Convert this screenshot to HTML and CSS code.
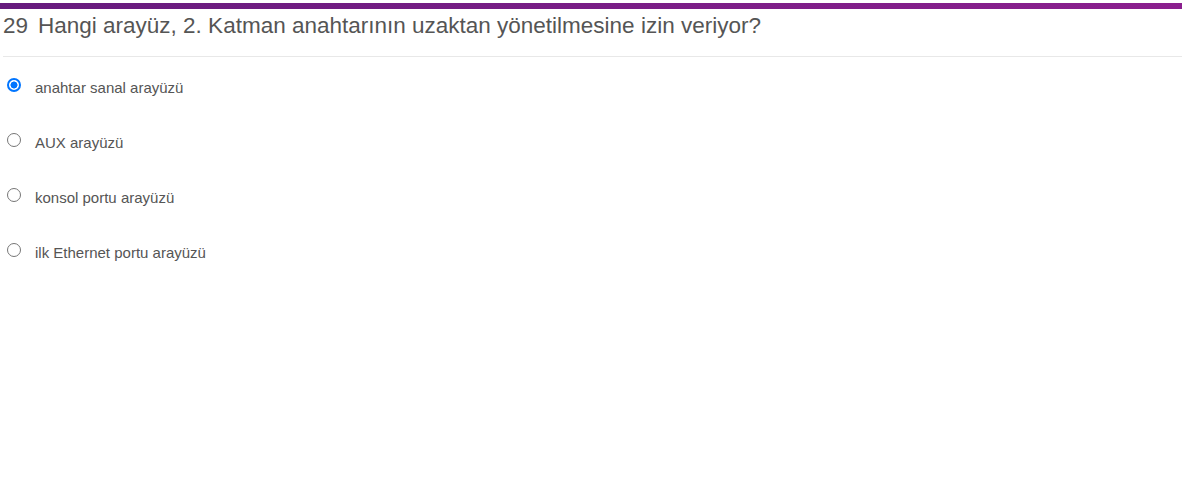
FILE: index.html
```html
<!DOCTYPE html>
<html lang="tr">
<head>
<meta charset="utf-8">
<link rel="stylesheet" href="styles.css">
</head>
<body>
<div class="topbar"></div>
<div class="question">
  <h2 class="title"><span class="num">29</span>Hangi arayüz, 2. Katman anahtarının uzaktan yönetilmesine izin veriyor?</h2>
  <ul class="options">
    <li class="option"><span class="radio checked"></span><span class="label">anahtar sanal arayüzü</span></li>
    <li class="option"><span class="radio"></span><span class="label">AUX arayüzü</span></li>
    <li class="option"><span class="radio"></span><span class="label">konsol portu arayüzü</span></li>
    <li class="option"><span class="radio"></span><span class="label">ilk Ethernet portu arayüzü</span></li>
  </ul>
</div>
</body>
</html>
```
FILE: styles.css
```css
html, body {
  margin: 0;
  padding: 0;
  background: #fff;
  font-family: "Liberation Sans", Arial, sans-serif;
  color: #555;
}
.topbar {
  margin-top: 3px;
  height: 6px;
  background: linear-gradient(to right, #661b7d, #8b1f8e);
}
.question {
  padding: 0 0 0 3px;
}
.title {
  margin: 0;
  padding: 4px 0 17px 0;
  font-size: 22.5px;
  font-weight: normal;
  line-height: 26px;
  color: #555;
  border-bottom: 1px solid #e8e8e8;
}
.num {
  margin-right: 10px;
}
.options {
  list-style: none;
  margin: 0;
  padding: 22px 0 0 4px;
}
.option {
  display: flex;
  align-items: flex-start;
  height: 55px;
}
.radio {
  box-sizing: border-box;
  width: 14px;
  height: 14px;
  border-radius: 50%;
  border: 1px solid #767676;
  background: #fff;
  margin-top: -1px;
  flex: none;
}
.radio.checked {
  border: 2px solid #0075ff;
  background: radial-gradient(circle, #0075ff 0 3.2px, #fff 3.8px);
}
.label {
  margin-left: 14px;
  font-size: 15px;
  line-height: 18px;
  color: #555;
}
```
